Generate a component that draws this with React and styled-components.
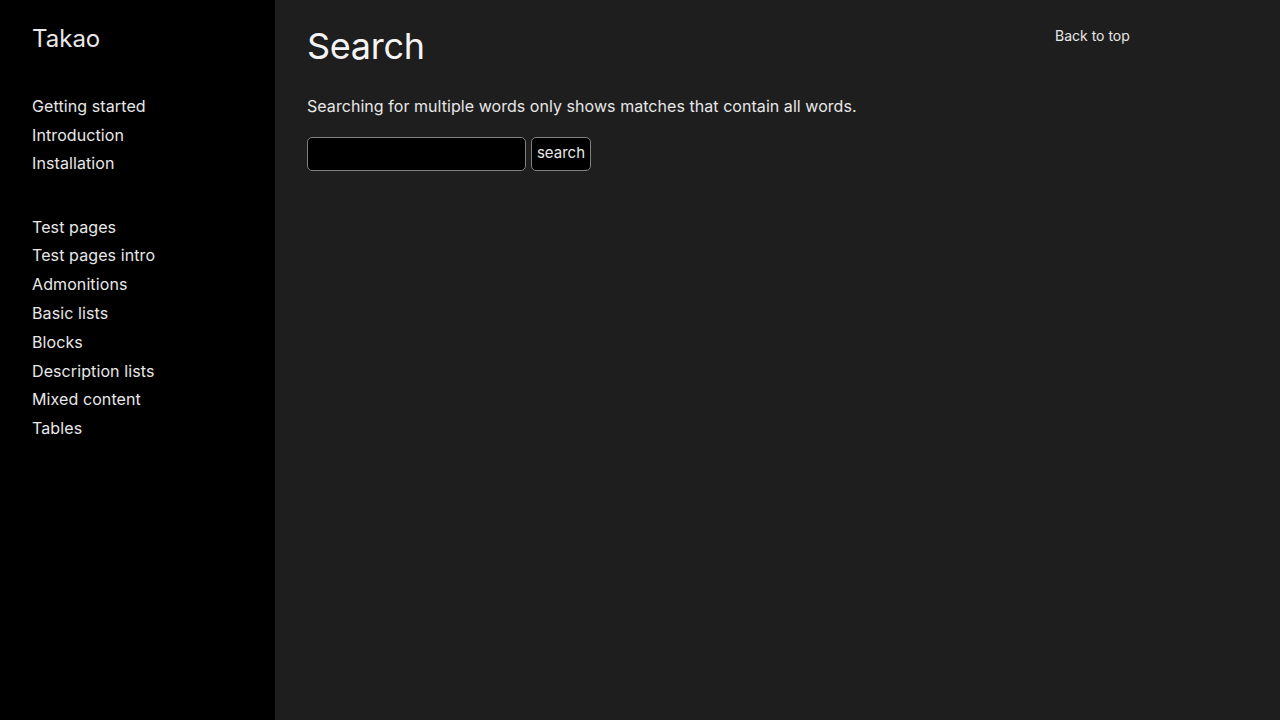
import React from "react";
import styled, { createGlobalStyle } from "styled-components";

const colors = {
  page: "#1e1e1e",
  sidebar: "#000000",
  text: "#e8e8e8",
  heading: "#f4f4f4",
  border: "#808080",
};

const navGroups = [
  ["Getting started", "Introduction", "Installation"],
  [
    "Test pages",
    "Test pages intro",
    "Admonitions",
    "Basic lists",
    "Blocks",
    "Description lists",
    "Mixed content",
    "Tables",
  ],
];

function App() {
  return (
    <>
      <GlobalStyle />
      <Layout>
        <Sidebar>
          <Brand>Takao</Brand>
          {navGroups.map((group) => (
            <NavGroup key={group[0]}>
              {group.map((item) => (
                <NavLink key={item} href="#">
                  {item}
                </NavLink>
              ))}
            </NavGroup>
          ))}
        </Sidebar>
        <Main>
          <Content>
            <Title>Search</Title>
            <Lead>
              Searching for multiple words only shows matches that contain all
              words.
            </Lead>
            <SearchForm onSubmit={(e) => e.preventDefault()}>
              <SearchInput type="text" aria-label="search" />
              <SearchButton type="submit">search</SearchButton>
            </SearchForm>
          </Content>
          <Aside>
            <TopLink href="#">Back to top</TopLink>
          </Aside>
        </Main>
      </Layout>
    </>
  );
}

const GlobalStyle = createGlobalStyle`
  html, body {
    margin: 0;
    padding: 0;
    background: ${colors.page};
    font-family: Inter, "Noto Sans", sans-serif;
    color: ${colors.text};
  }
  * { box-sizing: border-box; }
`;

const Layout = styled.div`
  display: flex;
  min-height: 720px;
`;

const Sidebar = styled.nav`
  width: 275px;
  flex-shrink: 0;
  background: ${colors.sidebar};
  padding: 25px 32px;
`;

const Brand = styled.div`
  font-size: 24px;
  line-height: 28.8px;
  color: ${colors.text};
  margin-bottom: 38px;
`;

const NavGroup = styled.div`
  display: flex;
  flex-direction: column;
  & + & {
    margin-top: 34.5px;
  }
`;

const NavLink = styled.a`
  font-size: 16px;
  line-height: 28.8px;
  letter-spacing: 0.1px;
  color: ${colors.text};
  text-decoration: none;
`;

const Main = styled.main`
  flex: 1;
  display: grid;
  grid-template-columns: 1fr 225px;
  padding-left: 32px;
`;

const Content = styled.div`
  padding-top: 25px;
`;

const Title = styled.h1`
  margin: 0;
  font-size: 36px;
  font-weight: 400;
  line-height: 43px;
  letter-spacing: -0.3px;
  color: ${colors.heading};
`;

const Lead = styled.p`
  margin: 25px 0 0;
  font-size: 16px;
  line-height: 26px;
  letter-spacing: 0.05px;
  color: ${colors.text};
`;

const SearchForm = styled.form`
  display: flex;
  gap: 5px;
  margin-top: 18px;
`;

const SearchInput = styled.input`
  width: 219px;
  height: 34px;
  background: #000;
  border: 1px solid ${colors.border};
  border-radius: 5px;
  color: ${colors.text};
  font: 15px Inter, sans-serif;
  padding: 0 8px;
  outline: none;
`;

const SearchButton = styled.button`
  width: 60px;
  height: 34px;
  padding: 0 0 3px;
  background: #000;
  border: 1px solid ${colors.border};
  border-radius: 5px;
  color: ${colors.text};
  font: 15px Inter, sans-serif;
  cursor: pointer;
`;

const Aside = styled.aside`
  padding-top: 25px;
`;

const TopLink = styled.a`
  font-size: 14px;
  line-height: 20px;
  color: ${colors.text};
  text-decoration: none;
`;

export default App;
